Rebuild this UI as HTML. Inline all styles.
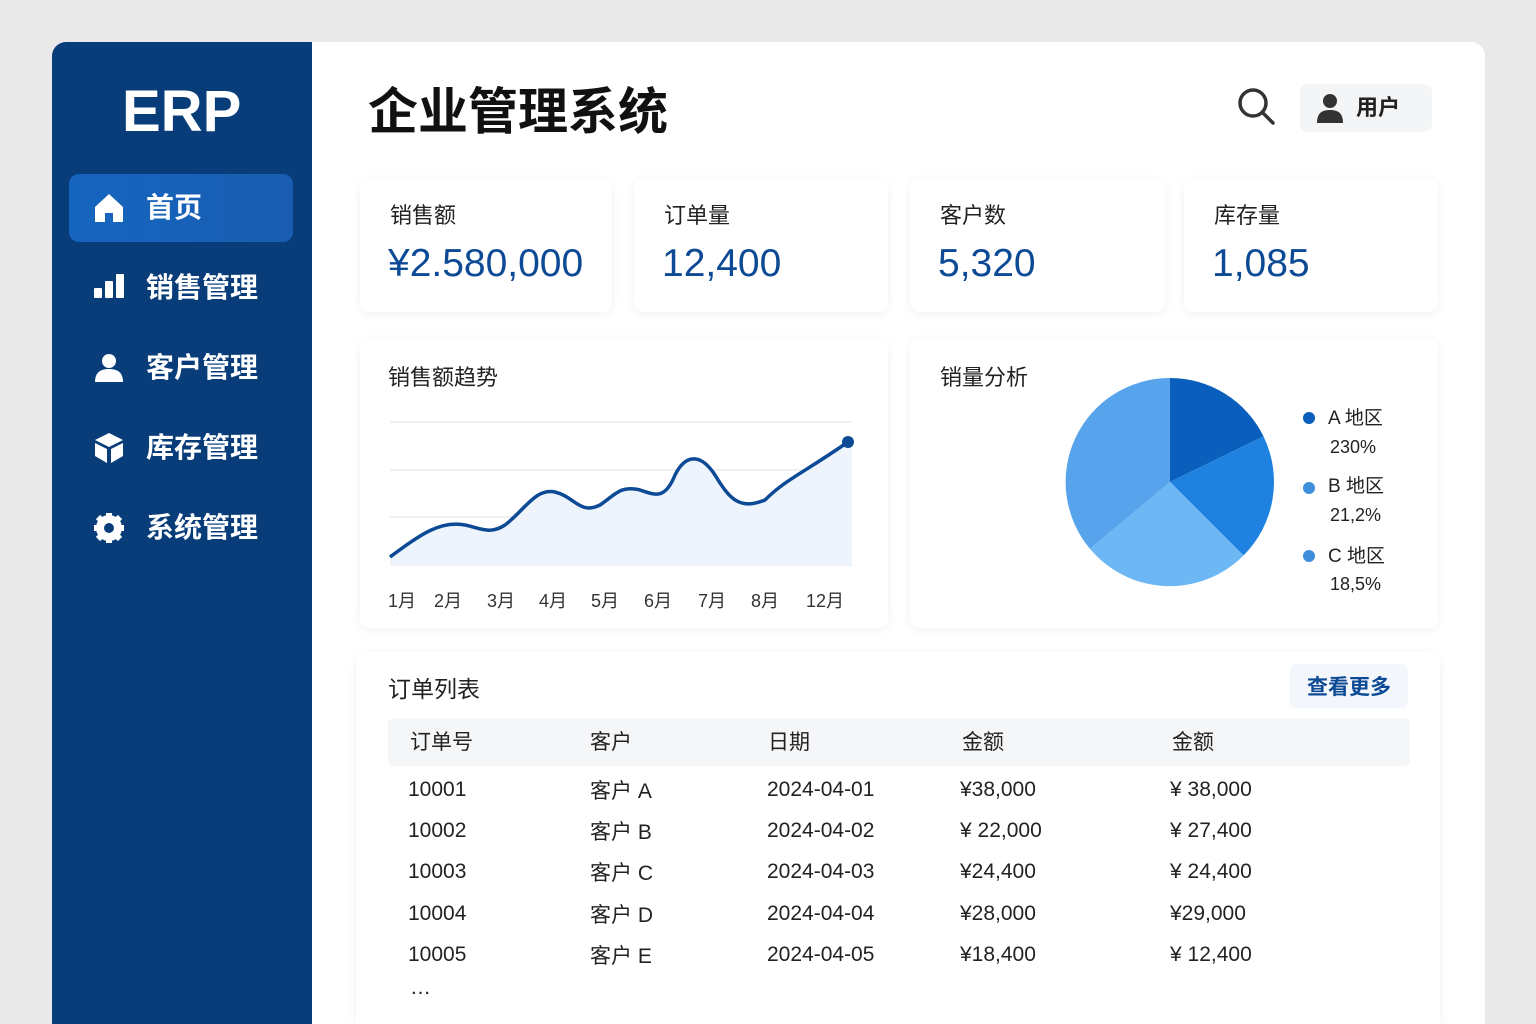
<!DOCTYPE html>
<html style="width:1536px;height:1024px;overflow:hidden"><head><meta charset="utf-8"><style>
*{margin:0;padding:0;box-sizing:border-box}
body{width:1536px;height:1024px;background:#e9e9ea;font-family:"Liberation Sans","Noto Sans CJK SC",sans-serif;position:relative;overflow:hidden}
.panel{position:absolute;left:52px;top:42px;width:1433px;height:982px;background:#fff;border-radius:14px 14px 0 0;overflow:hidden}
.side{position:absolute;left:0;top:0;width:260px;height:100%;background:#083d7a}
.logo{position:absolute;left:70px;top:36px;color:#fff;font-size:58px;font-weight:bold;letter-spacing:0}
.nav{position:absolute;left:17px;width:224px;height:68px;color:#fff;font-size:28px;font-weight:bold;font-family:"Noto Sans CJK SC",sans-serif}
.nav span{position:absolute;left:77px;top:12px}
.nav svg{position:absolute;left:24px;top:18px}
.active{background:linear-gradient(90deg,#1565c0,#1a5db0);border-radius:10px}
.card{position:absolute;background:#fff;border-radius:10px;box-shadow:0 2px 10px rgba(0,0,0,.06)}
.lbl{position:absolute;left:30px;top:20px;font-size:22px;color:#222;font-family:"Noto Sans CJK SC",sans-serif}
.val{position:absolute;left:28px;top:64px;font-size:39px;color:#0d4a96;font-weight:500}
.t{position:absolute;font-size:21px;color:#222;line-height:26px;white-space:nowrap}
.t b{font-weight:normal;font-family:"Noto Sans CJK SC",sans-serif}
</style></head><body>
<div class="panel">
<div class="side">
<div class="logo">ERP</div>
<div class="nav active" style="top:132px"><svg width="32" height="32" viewBox="0 0 32 32"><path d="M16 2 L30 15 V30 H20 V21 H12 V30 H2 V15 Z" fill="#fff"/></svg><span>首页</span></div>
<div class="nav" style="top:212px"><svg width="32" height="30" viewBox="0 0 32 30"><rect x="1" y="16" width="8" height="10" rx="1" fill="#fff"/><rect x="12" y="9" width="8" height="17" rx="1" fill="#fff"/><rect x="23" y="2" width="8" height="24" rx="1" fill="#fff"/></svg><span>销售管理</span></div>
<div class="nav" style="top:292px"><svg width="32" height="32" viewBox="0 0 32 32"><circle cx="16" cy="9" r="7" fill="#fff"/><path d="M2 30 C2 20 8 17 16 17 C24 17 30 20 30 30 Z" fill="#fff"/></svg><span>客户管理</span></div>
<div class="nav" style="top:372px"><svg width="32" height="32" viewBox="0 0 32 32"><path d="M16 1 L30 8 L16 15 L2 8 Z M2 11 L14 17 V31 L2 24 Z M30 11 L18 17 V31 L30 24 Z" fill="#fff"/></svg><span>库存管理</span></div>
<div class="nav" style="top:452px"><svg width="32" height="32" viewBox="0 0 32 32"><circle cx="16" cy="16" r="10" fill="none" stroke="#fff" stroke-width="6"/><g stroke="#fff" stroke-width="6"><line x1="16" y1="1" x2="16" y2="31"/><line x1="1" y1="16" x2="31" y2="16"/><line x1="5" y1="5" x2="27" y2="27"/><line x1="27" y1="5" x2="5" y2="27"/></g><circle cx="16" cy="16" r="5" fill="#083d7a"/></svg><span>系统管理</span></div>
</div>
</div>
<div style="position:absolute;left:368px;top:72px;font-size:50px;font-weight:bold;color:#111;font-family:'Noto Sans CJK SC',sans-serif">企业管理系统</div>
<svg style="position:absolute;left:1236px;top:86px" width="40" height="40" viewBox="0 0 40 40"><circle cx="17" cy="17" r="13" fill="none" stroke="#333" stroke-width="3.5"/><line x1="27" y1="27" x2="37" y2="37" stroke="#333" stroke-width="3.5" stroke-linecap="round"/></svg>
<div style="position:absolute;left:1300px;top:84px;width:132px;height:48px;background:#f4f5f7;border-radius:8px"><svg style="position:absolute;left:16px;top:9px" width="28" height="30" viewBox="0 0 28 30"><circle cx="14" cy="8" r="7" fill="#333"/><path d="M1 30 C1 20 6 17 14 17 C22 17 27 20 27 30Z" fill="#333"/></svg><span style="position:absolute;left:56px;top:6px;font-size:22px;color:#222;font-weight:bold;font-family:'Noto Sans CJK SC',sans-serif">用户</span></div>

<div class="card" style="left:360px;top:178px;width:252px;height:134px"><div class="lbl">销售额</div><div class="val">¥2.580,000</div></div>
<div class="card" style="left:634px;top:178px;width:254px;height:134px"><div class="lbl">订单量</div><div class="val">12,400</div></div>
<div class="card" style="left:910px;top:178px;width:255px;height:134px"><div class="lbl">客户数</div><div class="val">5,320</div></div>
<div class="card" style="left:1184px;top:178px;width:254px;height:134px"><div class="lbl">库存量</div><div class="val">1,085</div></div>

<div class="card" style="left:360px;top:338px;width:528px;height:290px"><div class="lbl" style="left:28px;top:22px">销售额趋势</div></div>
<svg style="position:absolute;left:0;top:0" width="1536" height="1024" viewBox="0 0 1536 1024">
<g stroke="#dde1e6" stroke-width="1"><line x1="390" y1="422" x2="852" y2="422"/><line x1="390" y1="470" x2="852" y2="470"/><line x1="390" y1="517" x2="852" y2="517"/><line x1="390" y1="565" x2="852" y2="565"/></g>
<path d="M390 557 C420 535,440 520,465 525 C480 528,490 535,505 525 C525 510,535 488,555 492 C575 497,580 515,600 505 C615 495,620 485,640 490 C655 495,665 500,675 475 C685 455,700 452,715 475 C730 500,740 510,765 500 C785 480,800 475,848 442 L852 442 L852 565 L390 565Z" fill="#eef4fc"/>
<path d="M390 557 C420 535,440 520,465 525 C480 528,490 535,505 525 C525 510,535 488,555 492 C575 497,580 515,600 505 C615 495,620 485,640 490 C655 495,665 500,675 475 C685 455,700 452,715 475 C730 500,740 510,765 500 C785 480,800 475,848 442" fill="none" stroke="#0d4a96" stroke-width="3.5"/>
<circle cx="848" cy="442" r="6" fill="#0d4a96"/>
</svg>
<div class="t" style="left:388px;top:588px;font-size:18px;color:#333">1月</div>
<div class="t" style="left:434px;top:588px;font-size:18px;color:#333">2月</div>
<div class="t" style="left:487px;top:588px;font-size:18px;color:#333">3月</div>
<div class="t" style="left:539px;top:588px;font-size:18px;color:#333">4月</div>
<div class="t" style="left:591px;top:588px;font-size:18px;color:#333">5月</div>
<div class="t" style="left:644px;top:588px;font-size:18px;color:#333">6月</div>
<div class="t" style="left:698px;top:588px;font-size:18px;color:#333">7月</div>
<div class="t" style="left:751px;top:588px;font-size:18px;color:#333">8月</div>
<div class="t" style="left:806px;top:588px;font-size:18px;color:#333">12月</div>

<div class="card" style="left:910px;top:338px;width:528px;height:290px"><div class="lbl" style="top:22px">销量分析</div></div>
<svg style="position:absolute;left:0;top:0" width="1536" height="1024">
<path d="M1170 482 L1170 378 A104 104 0 0 1 1263.5 436.4Z" fill="#0a5fbd"/>
<path d="M1170 482 L1263.5 436.4 A104 104 0 0 1 1243.5 555.5Z" fill="#1f82e0"/>
<path d="M1170 482 L1243.5 555.5 A104 104 0 0 1 1090 548.9Z" fill="#6db7f5"/>
<path d="M1170 482 L1090 548.9 A104 104 0 0 1 1170 378Z" fill="#58a4ec"/>
<circle cx="1309" cy="418" r="6" fill="#0a5fbd"/><circle cx="1309" cy="488" r="6" fill="#3d8fdc"/><circle cx="1309" cy="556" r="6" fill="#3d8fdc"/>
</svg>
<div class="t" style="left:1328px;top:404px;font-size:19px">A <b>地区</b></div><div class="t" style="left:1330px;top:434px;font-size:18px">230%</div>
<div class="t" style="left:1328px;top:472px;font-size:19px">B <b>地区</b></div><div class="t" style="left:1330px;top:502px;font-size:18px">21,2%</div>
<div class="t" style="left:1328px;top:542px;font-size:19px">C <b>地区</b></div><div class="t" style="left:1330px;top:571px;font-size:18px">18,5%</div>

<div class="card" style="left:356px;top:652px;width:1084px;height:372px;border-radius:10px 10px 0 0"></div>
<div class="t" style="left:388px;top:672px;font-size:23px;line-height:30px"><b>订单列表</b></div>
<div style="position:absolute;left:1290px;top:664px;width:118px;height:44px;background:#f3f6fa;border-radius:6px;color:#0d4a96;font-size:21px;font-weight:bold;text-align:center;line-height:44px;font-family:'Noto Sans CJK SC',sans-serif">查看更多</div>
<div style="position:absolute;left:388px;top:718px;width:1022px;height:48px;background:#f5f6f8;border-radius:6px"></div>
<div class="t" style="left:410px;top:728px"><b>订单号</b></div><div class="t" style="left:590px;top:728px"><b>客户</b></div><div class="t" style="left:768px;top:728px"><b>日期</b></div><div class="t" style="left:962px;top:728px"><b>金额</b></div><div class="t" style="left:1172px;top:728px"><b>金额</b></div>
<div class="t" style="left:408px;top:777px">10001</div><div class="t" style="left:590px;top:777px"><b>客户</b> A</div><div class="t" style="left:767px;top:777px">2024-04-01</div><div class="t" style="left:960px;top:777px">¥38,000</div><div class="t" style="left:1170px;top:777px">¥ 38,000</div>
<div class="t" style="left:408px;top:818px">10002</div><div class="t" style="left:590px;top:818px"><b>客户</b> B</div><div class="t" style="left:767px;top:818px">2024-04-02</div><div class="t" style="left:960px;top:818px">¥ 22,000</div><div class="t" style="left:1170px;top:818px">¥ 27,400</div>
<div class="t" style="left:408px;top:859px">10003</div><div class="t" style="left:590px;top:859px"><b>客户</b> C</div><div class="t" style="left:767px;top:859px">2024-04-03</div><div class="t" style="left:960px;top:859px">¥24,400</div><div class="t" style="left:1170px;top:859px">¥ 24,400</div>
<div class="t" style="left:408px;top:901px">10004</div><div class="t" style="left:590px;top:901px"><b>客户</b> D</div><div class="t" style="left:767px;top:901px">2024-04-04</div><div class="t" style="left:960px;top:901px">¥28,000</div><div class="t" style="left:1170px;top:901px">¥29,000</div>
<div class="t" style="left:408px;top:942px">10005</div><div class="t" style="left:590px;top:942px"><b>客户</b> E</div><div class="t" style="left:767px;top:942px">2024-04-05</div><div class="t" style="left:960px;top:942px">¥18,400</div><div class="t" style="left:1170px;top:942px">¥ 12,400</div>
<div class="t" style="left:410px;top:975px">…</div>
</body></html>
